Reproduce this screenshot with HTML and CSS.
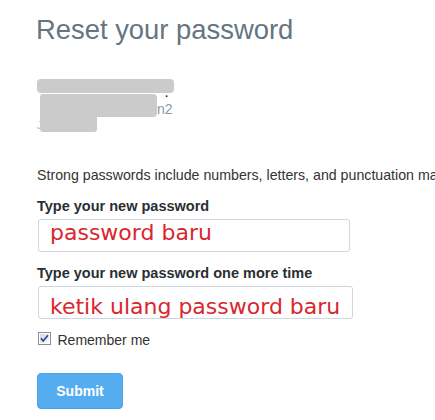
FILE: index.html
```html
<!DOCTYPE html>
<html>
<head>
<meta charset="utf-8">
<link rel="stylesheet" href="styles.css">
</head>
<body>
<div class="page">
  <h1 class="title">Reset your password</h1>
  <div class="account">
    <span class="frag frag-bang">!</span>
    <span class="frag frag-j">J</span>
    <span class="frag frag-dot">.</span>
    <span class="handle">n2</span>
    <div class="redact redact-1"></div>
    <div class="redact redact-2"></div>
    <div class="redact redact-3"></div>
  </div>
  <p class="hint">Strong passwords include numbers, letters, and punctuation marks.</p>
  <label class="label label-first">Type your new password</label>
  <div class="field field-1"><span class="note">password baru</span></div>
  <label class="label label-second">Type your new password one more time</label>
  <div class="field field-2"><span class="note">ketik ulang password baru</span></div>
  <div class="remember">
    <svg class="check" width="13" height="13" viewBox="0 0 13 13">
      <defs>
        <linearGradient id="cbg" x1="0" y1="0" x2="1" y2="1">
          <stop offset="0" stop-color="#d6d9de"/>
          <stop offset="1" stop-color="#f7f8fa"/>
        </linearGradient>
      </defs>
      <rect x="0.5" y="0.5" width="12" height="12" fill="#ffffff" stroke="#8a8f96"/>
      <rect x="2" y="2" width="9" height="9" fill="url(#cbg)"/>
      <path d="M3 6.2 L5.2 9 L10 3.2" fill="none" stroke="#2a3f9e" stroke-width="1.6"/>
    </svg>
    <span class="remember-text">Remember me</span>
  </div>
  <button class="submit">Submit</button>
</div>
</body>
</html>
```

FILE: styles.css
```css
html, body {
  margin: 0;
  padding: 0;
  background: #ffffff;
}

.page {
  padding-left: 37px;
  font-family: "Liberation Sans", Arial, sans-serif;
  font-size: 14px;
  color: #292f33;
  overflow: hidden;
  width: 398px;
}

.title {
  margin: 14px 0 0 -1px;
  font-size: 27.4px;
  line-height: 32px;
  font-weight: normal;
  color: #66757f;
  white-space: nowrap;
}

.account {
  position: relative;
  margin-top: 33px;
  height: 53px;
}

.handle {
  position: absolute;
  left: 120px;
  top: 22px;
  font-size: 14px;
  line-height: 16px;
  color: #8899a6;
}

.frag {
  position: absolute;
  font-size: 11px;
  line-height: 12px;
}
.frag-bang { left: 12px; top: 24px; color: #555; }
.frag-j { left: 0px; top: 40px; color: #bbb; }
.frag-dot { left: 128px; top: 8px; color: #222; font-weight: bold; }

.redact {
  position: absolute;
  background: #cbcbcb;
  border-radius: 4px;
}
.redact-1 { left: 0; top: 0; width: 137px; height: 14px; }
.redact-2 { left: 3px; top: 15px; width: 117px; height: 23px; }
.redact-3 { left: 3px; top: 15px; width: 57px; height: 38px; border-radius: 3px; }

.hint {
  margin: 35px 0 0 0;
  font-size: 14.2px;
  line-height: 16px;
  white-space: nowrap;
  color: #333333;
}

.label {
  display: block;
  font-weight: bold;
  font-size: 14.5px;
  line-height: 16px;
  white-space: nowrap;
}
.label-first { margin-top: 15px; }
.label-second { margin-top: 13px; }

.field {
  box-sizing: border-box;
  margin: 5px 0 0 1px;
  height: 33px;
  border: 1px solid #ccd6dd;
  border-radius: 3px;
  padding-left: 11px;
  font-family: "DejaVu Sans", Verdana, sans-serif;
  font-size: 22px;
  line-height: 26px;
  color: #d9262f;
  white-space: nowrap;
}
.field-1 { width: 312px; padding-top: 0; }
.field-2 { width: 315px; padding-top: 7px; }

.remember {
  display: flex;
  align-items: flex-start;
  gap: 7px;
  margin-top: 13px;
  height: 16px;
}
.check {
  display: block;
  flex: none;
  margin-left: 0.5px;
}
.remember-text {
  line-height: 16px;
  color: #333333;
}

.submit {
  display: block;
  margin-top: 25px;
  width: 86px;
  height: 36px;
  padding: 0;
  border: 1px solid #4aa3e6;
  border-radius: 4px;
  background: #55acee;
  color: #ffffff;
  font-family: "Liberation Sans", Arial, sans-serif;
  font-size: 14px;
  font-weight: bold;
  line-height: 34px;
  text-align: center;
}
```
